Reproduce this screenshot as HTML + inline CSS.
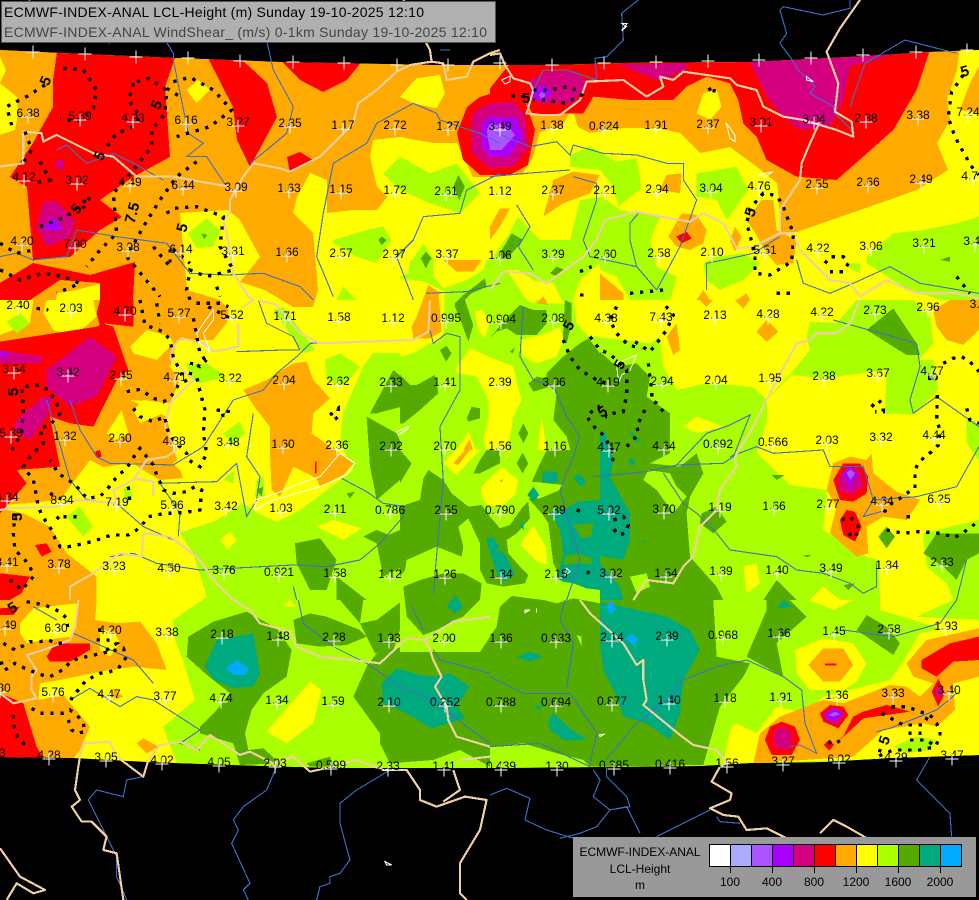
<!DOCTYPE html>
<html><head><meta charset="utf-8"><title>ECMWF LCL-Height</title>
<style>
html,body{margin:0;padding:0;background:#000;width:979px;height:900px;overflow:hidden}
svg{display:block}
text{font-family:"Liberation Sans",sans-serif;font-size:12px}
.l text{text-anchor:middle;fill:#000}
.b text{font-weight:bold;font-size:15px;text-anchor:middle;fill:#000}
.d path{fill:none;stroke:#000;stroke-width:10;stroke-dasharray:10 20}
.r path{fill:none;stroke:#3f70c8;stroke-width:3.3}
.t path{fill:none;stroke:#f0d0a2;stroke-width:6.5;stroke-linejoin:round}
.w path{fill:none;stroke:#fff;stroke-width:3}
</style></head><body>
<svg width="979" height="900" viewBox="0 0 979 900" xmlns="http://www.w3.org/2000/svg" shape-rendering="crispEdges">
<defs>
<clipPath id="c"><polygon points="0,50 60,53 175,58 280,62 433,65 553,65 623,63 750,62 850,57 930,52 979,50 979,755 890,758 823,762 750,763 700,766 490,768 333,768 233,765 147,762 73,758 0,757"/></clipPath>
<marker id="p" markerUnits="userSpaceOnUse" markerWidth="14" markerHeight="14" refX="7" refY="7" overflow="visible"><path d="M0.5 7H13.5M7 0.5V13.5" stroke="#fff" stroke-width="1" fill="none"/></marker>
</defs>
<rect width="979" height="900" fill="#000"/>
<g clip-path="url(#c)">
<rect width="979" height="900" fill="#ff0"/>

<!-- lime large -->
<g fill="#af0">
<polygon points="207,597 193,553 180,533 217,520 243,503 257,513 277,522 300,510 317,498 353,470 340,443 343,413 363,367 373,353 400,353 430,343 440,330 453,300 470,290 490,262 510,232 518,217 540,240 570,240 580,200 603,197 620,210 660,217 650,240 657,267 677,277 670,300 660,337 663,367 677,390 707,383 753,387 767,400 767,420 757,453 790,485 827,490 823,530 867,557 880,560 880,610 979,640 979,770 180,770 163,727 195,700 183,660 175,640 173,620"/>
<g transform="translate(490 300) scale(.3333)">
<polygon points="830,300 905,225 1000,235 1190,210 1285,180 1330,130 1320,50 1270,0 1100,0 1040,70 960,65 950,110 960,150 920,200"/>
<polygon points="1190,210 1285,180 1330,180 1345,270 1270,345 1185,340"/>
<polygon points="1300,700 1467,660 1467,900 1390,900 1300,850"/>
<polygon points="1430,360 1467,370 1467,480 1430,430"/>
</g>
<g transform="translate(490 0) scale(.3333)">
<polygon points="240,465 300,440 380,485 440,475 455,565 385,620 370,560 330,510 240,500"/>
<polygon points="620,520 740,500 775,570 710,660 680,600 620,590"/>
<polygon points="640,790 680,770 760,760 810,790 760,840 690,870 650,840"/>
<polygon points="1070,790 1110,790 1110,820 1070,800"/>
<polygon points="1130,770 1210,700 1300,690 1400,670 1467,650 1467,900 1350,900 1240,860 1130,790"/>
</g>
<g transform="translate(490 600) scale(.3333)"><polygon points="1280,50 1390,0 1467,0 1467,60"/></g>
</g>
<!-- yellow over lime -->
<g fill="#ff0">
<g transform="translate(490 0) scale(.3333)"><polygon points="250,830 310,800 380,830 420,900 250,900"/></g>
<g transform="translate(490 300) scale(.3333)">
<polygon points="290,0 540,0 510,110 480,130 400,120 300,110"/>
<polygon points="580,380 620,350 700,380 620,400"/>
<polygon points="760,800 800,790 810,850 770,880"/>
<polygon points="1165,770 1300,720 1310,800 1370,850 1390,900 1170,900"/>
<polygon points="960,900 1000,860 1050,900"/>
</g>
<g transform="translate(0 300) scale(.3333)">
<polygon points="660,720 690,695 710,720 685,750"/>
<polygon points="950,680 1000,660 1085,685 1030,720"/>
<polygon points="1110,0 1130,0 1100,20"/>
</g>
<g transform="translate(0 600) scale(.3333)">
<polygon points="800,395 930,245 965,270 940,370 860,430"/>
<polygon points="850,20 870,0 890,20"/>
</g>
<g transform="translate(490 600) scale(.3333)">
<polygon points="720,390 740,370 800,400 860,320 950,340 1000,290 1200,240 1230,200 1290,100 1467,65 1467,470 700,490"/>
<polygon points="915,150 1000,115 1090,130 1130,190 1100,245 1060,270 960,270 920,220"/>
<polygon points="960,0 1030,30 1090,0"/>
<polygon points="1170,0 1180,30 1280,50 1390,0"/>
</g>
</g>

<!-- orange -->
<g fill="#fa0">
<polygon points="0,45 960,45 957,70 947,100 950,120 937,143 948,170 917,190 883,202 840,217 797,232 780,232 778,190 777,183 757,167 730,147 700,153 680,133 657,128 623,128 590,133 578,127 572,108 562,127 540,132 533,157 523,173 490,177 473,177 457,143 433,143 400,137 373,140 370,157 377,187 387,197 377,210 353,210 327,213 327,180 310,173 297,197 293,213 313,233 318,290 313,307 293,307 265,290 240,282 260,257 240,220 228,210 180,213 187,290 220,300 233,315 213,340 177,340 170,367 180,380 170,403 130,400 167,417 173,447 183,478 160,480 143,470 133,463 103,467 90,460 60,500 30,503 0,505"/>
<g transform="translate(490 0) scale(.3333)">
<polygon points="1440,250 1467,200 1467,340 1410,330"/>
<polygon points="160,650 190,540 250,515 330,525 300,580 220,610"/>
<polygon points="510,570 530,525 575,520 570,580"/>
<polygon points="535,710 575,640 620,645 650,690 640,730 600,750 560,740"/>
<polygon points="720,720 735,680 755,710 735,755"/>
<polygon points="0,680 30,625 60,625 30,680 0,720"/>
<polygon points="310,800 340,830 400,880 400,900 320,900"/>
<polygon points="620,900 640,870 660,900"/>
<polygon points="740,900 770,880 780,900"/>
<polygon points="770,660 815,600 850,600 860,690 920,720 910,790 860,795 830,760 790,690"/>
</g>
<g transform="translate(0 300) scale(.3333)">
<polygon points="730,270 800,240 880,190 920,185 940,240 990,295 940,340 935,400 1060,490 1030,525 960,560 950,535 880,500 840,590 815,570 810,460 810,380 770,330"/>
<polygon points="0,625 70,640 150,680 200,760 290,830 290,900 0,900"/>
</g>
<g transform="translate(490 300) scale(.3333)">
<polygon points="530,110 560,70 570,150 550,165"/>
<polygon points="800,95 830,60 865,95 830,125"/>
<polygon points="630,0 670,0 650,20"/>
<polygon points="735,0 780,0 760,25"/>
<polygon points="1330,30 1380,0 1467,0 1467,90 1420,135 1370,120 1340,80"/>
<polygon points="1080,470 1130,480 1145,460 1150,520 1220,575 1290,600 1250,660 1180,650 1130,680 1135,760 1100,770 1020,700 1040,620 1010,570 1030,490"/>
</g>
<g transform="translate(0 600) scale(.3333)">
<polygon points="0,0 290,0 285,60 350,70 420,65 470,130 500,210 400,200 300,215 180,240 120,250 115,300 190,285 270,380 240,450 220,475 0,475"/>
<polygon points="410,430 430,415 475,440 440,460"/>
<polygon points="340,265 370,290 340,300"/>
</g>
<g transform="translate(490 600) scale(.3333)">
<polygon points="1250,190 1310,120 1400,100 1467,85 1467,230 1390,250 1395,330 1340,380 1300,370 1180,390 1090,470 790,490 810,400 870,350 1000,300 1060,310 1200,255 1250,260 1290,290 1330,250 1270,230"/>
<polygon points="955,195 1000,145 1060,145 1090,195 1050,245 1000,245"/>
</g>
</g>
<!-- yellow holes in orange -->
<g fill="#ff0">
<g transform="scale(.3333)">
<polygon points="0,170 18,210 0,250 50,290 55,340 45,390 0,405"/>
<polygon points="560,270 595,240 630,270 590,310"/>
<polygon points="1200,290 1250,235 1320,225 1335,280 1310,325 1240,310"/>
<polygon points="170,880 230,870 305,850 300,900 170,900"/>
<polygon points="440,840 445,835 455,860"/>
</g>
<g transform="translate(0 300) scale(.3333)">
<polygon points="0,0 100,0 90,70 0,105"/>
<polygon points="140,0 280,0 290,50 220,110 160,90 130,40"/>
<polygon points="300,80 320,65 335,85 315,100"/>
<polygon points="390,140 440,90 510,110 520,130 470,180 400,160"/>
<polygon points="340,370 365,330 385,400 345,420 320,400"/>
<polygon points="400,330 430,300 500,310 490,340 420,370"/>
<polygon points="690,0 730,0 715,60 680,75"/>
<polygon points="520,490 560,460 620,510 560,530"/>
</g>
<g transform="translate(490 0) scale(.3333)">
<polygon points="620,340 640,280 680,270 695,320 660,360"/>
</g>
<g transform="translate(0 600) scale(.3333)">
<polygon points="60,70 100,25 230,10 230,80 215,110 130,120 80,130 60,100"/>
<polygon points="300,85 345,100 360,130 330,170 300,150"/>
</g>
</g>

<!-- lime small -->
<g fill="#af0">
<g transform="scale(.3333)">
<polygon points="1150,520 1200,470 1290,520 1370,490 1440,580 1380,640 1290,610 1200,570"/>
<polygon points="1000,720 1100,690 1150,680 1175,720 1130,790 1070,770 1000,730"/>
<polygon points="1230,790 1270,730 1310,790 1290,850 1230,820"/>
<polygon points="565,700 620,655 660,690 640,740 590,745"/>
<polygon points="1010,900 1030,860 1070,900"/>
</g>
<g transform="translate(0 300) scale(.3333)">
<polygon points="20,65 60,40 90,70 50,100"/>
<polygon points="200,650 240,620 280,680 250,710"/>
<polygon points="370,570 385,555 400,590 380,615"/>
<polygon points="560,190 620,190 680,230 600,250 570,230"/>
<polygon points="820,30 850,20 945,150 910,160"/>
<polygon points="670,400 720,365 735,400 700,435"/>
<polygon points="975,180 1020,160 1080,200 1030,260 980,240"/>
<polygon points="680,530 705,510 700,550 670,540"/>
<polygon points="770,540 790,530 795,590 765,590"/>
</g>
<g transform="translate(490 600) scale(.3333)">
<polygon points="1210,440 1280,410 1340,420 1320,450 1250,460"/>
</g>
</g>

<!-- green -->
<g fill="#5a0">
<g transform="translate(490 300) scale(.3333)">
<polygon points="0,690 0,900 700,900 680,860 600,770 590,640 600,590 640,520 620,460 570,500 480,490 540,460 540,340 470,290 480,230 440,190 380,200 290,120 240,170 180,200 170,250 190,320 190,370 260,420 260,460 230,510 150,520 100,540 40,620"/>
<polygon points="1130,90 1210,25 1280,130 1290,165 1250,165"/>
<polygon points="1300,760 1340,700 1467,700 1467,760 1430,780 1400,840 1360,800"/>
<polygon points="845,525 885,525 860,540"/>
<polygon points="820,900 860,840 920,900"/>
<polygon points="1165,710 1190,680 1215,710 1190,745"/>
<polygon points="635,640 680,620 710,665 670,700 630,670"/>
<polygon points="1060,855 1095,850 1075,870"/>
<polygon points="940,765 965,765 950,772"/>
</g>
<g transform="translate(0 300) scale(.3333)">
<polygon points="1110,340 1180,210 1240,260 1300,240 1280,300 1130,340"/>
<polygon points="1100,350 1190,400 1230,490 1200,540 1130,600 1110,500"/>
<polygon points="1090,710 1130,690 1180,710 1210,800 1150,830 1130,730"/>
<polygon points="885,730 960,715 1010,780 980,870 930,870 890,790"/>
<polygon points="1040,580 1065,575 1050,595"/>
<polygon points="1010,830 1100,900 1010,900"/>
<polygon points="770,570 790,560 785,590"/>
<polygon points="1215,640 1300,600 1200,690 1130,720 1200,800 1200,900 1220,900 1200,690"/>
</g>
<g transform="translate(490 0) scale(.3333)">
<polygon points="30,760 65,700 100,720 40,790"/>
<polygon points="180,810 200,800 225,820 190,830"/>
<polygon points="1350,780 1380,770 1380,785"/>
</g>
<g transform="scale(.3333)">
<polygon points="1375,525 1395,560 1378,600 1360,560"/>
<polygon points="1145,710 1160,720 1145,735 1135,720"/>
<polygon points="1278,755 1295,775 1278,810 1262,775"/>
<polygon points="605,700 622,705 612,718"/>
<polygon points="1380,870 1460,830 1420,900 1380,900"/>
</g>
<g transform="translate(0 600) scale(.3333)">
<polygon points="565,110 640,65 740,35 830,85 875,150 860,230 790,280 755,330 735,400 745,450 790,445 840,490 720,495 700,430 600,400 600,380 650,330 690,280 615,220 560,170"/>
<polygon points="1060,290 1100,200 1130,160 1250,130 1270,100 1360,70 1470,40 1470,500 1380,450 1300,480 1170,490 1140,430 1140,400"/>
<polygon points="880,60 930,40 980,50 1080,90 1100,110 1040,135 960,140 890,130"/>
<polygon points="1020,0 1090,0 1080,70 1130,60 1210,0 1210,60 1180,150 1125,160 1080,70"/>
<polygon points="920,490 990,470 1000,500 930,500"/>
</g>
<g transform="translate(490 600) scale(.3333)">
<polygon points="0,0 670,0 680,170 780,190 760,230 690,320 640,495 300,500 280,480 200,460 100,430 0,440"/>
<polygon points="770,170 830,30 830,0 900,0 950,50 860,130 880,230"/>
<polygon points="1100,90 1130,45 1190,80 1230,130 1210,165"/>
</g>
</g>
<!-- lime holes in green -->
<g fill="#af0">
<g transform="translate(490 300) scale(.3333)">
<polygon points="60,660 120,620 180,640 220,760 170,820 100,800"/>
<polygon points="475,510 540,520 560,560 590,590 550,640 500,570 460,540"/>
<polygon points="240,680 300,670 310,700 250,705"/>
<polygon points="420,830 470,820 480,860 440,880"/>
<polygon points="150,340 170,340 175,410 155,430"/>
</g>
<g transform="translate(490 600) scale(.3333)">
<polygon points="260,110 275,110 270,135"/>
</g>
</g>

<!-- teal -->
<g fill="#00aa7f">
<g transform="translate(490 300) scale(.3333)">
<polygon points="310,390 345,395 370,480 360,530 420,640 420,720 400,780 340,770 280,750 250,720 215,670 180,640 220,620 270,610 310,530"/>
<polygon points="190,800 210,750 260,760 330,790 390,860 400,900 240,900 230,830"/>
<polygon points="415,480 425,470 435,490 425,500"/>
<polygon points="415,390 450,420 440,430"/>
<polygon points="450,725 460,720 465,730"/>
</g>
<g transform="translate(0 600) scale(.3333)">
<polygon points="615,200 650,120 760,100 780,220 760,260 700,265 640,240"/>
<polygon points="1145,250 1190,205 1260,225 1300,230 1350,220 1410,260 1370,320 1395,355 1295,385 1220,340 1150,310"/>
</g>
<g transform="translate(490 600) scale(.3333)">
<polygon points="310,0 530,50 600,90 630,150 580,240 570,340 540,420 470,370 400,350 380,290 340,210 330,130"/>
<polygon points="80,170 120,155 160,170 120,185"/>
<polygon points="175,360 190,340 240,385 290,420 220,420 180,390"/>
<polygon points="130,315 160,320 145,330"/>
<polygon points="880,0 910,20 860,25"/>
</g>
</g>
<g fill="#00aaff">
<g transform="translate(0 600) scale(.3333)"><polygon points="678,205 710,180 745,205 735,225 700,225"/></g>
<g transform="translate(490 600) scale(.3333)">
<polygon points="350,20 362,0 378,25 362,45"/>
<polygon points="405,115 425,100 445,120 430,135"/>
</g>
</g>

<!-- centre patch z8 -->
<rect x="400" y="260" width="200" height="392" fill="#af0"/>
<g transform="translate(400 260) scale(.3333)">
<g fill="#ff0">
<polygon points="0,0 30,0 25,40 0,50"/>
<polygon points="100,0 260,0 250,30 200,60 130,85 100,50"/>
<polygon points="0,55 75,65 135,95 130,215 115,245 90,250 40,280 0,290"/>
<polygon points="165,330 210,265 290,300 340,320 355,385 365,420 340,470 330,530 320,600 270,600 250,540 265,470 265,420 230,350 175,340"/>
<polygon points="150,600 205,515 240,600"/>
<polygon points="410,600 425,470 445,600"/>
<polygon points="320,30 355,30 400,60 420,110 400,130 380,120"/>
<polygon points="385,60 460,70 490,130 420,130"/>
<polygon points="360,240 440,220 480,200 490,240 470,290 410,310 370,290"/>
<polygon points="225,155 245,150 270,180 255,235 235,210"/>
<polygon points="540,60 600,10 600,230 565,230 530,190 520,120"/>
</g>
<g fill="#fa0">
<polygon points="130,0 245,0 220,35 170,35"/>
<polygon points="85,75 115,95 120,150 125,215 90,235 40,235 35,200 50,170 65,130"/>
<polygon points="190,570 210,535 218,570"/>
<polygon points="410,130 430,110 445,135"/>
</g>
<g fill="#5a0">
<polygon points="120,270 140,258 155,280 138,305"/>
<polygon points="0,345 30,375 50,375 105,345 115,400 60,450 10,490 0,490"/>
<polygon points="165,130 190,105 255,55 260,80 215,100 195,120 220,195 205,245 185,190 165,140"/>
<polygon points="450,40 470,20 495,30 470,50"/>
<polygon points="65,0 90,0 78,25"/>
<polygon points="270,235 310,185 360,135 400,150 440,150 440,190 410,225 350,225 320,205 290,215"/>
<polygon points="330,275 345,262 338,280"/>
<polygon points="495,120 515,130 515,190 500,250 488,245"/>
<polygon points="440,340 490,290 540,250 565,235 600,280 600,600 520,600 500,530 460,480 470,400 450,380 400,395 385,370 410,350 440,355"/>
<polygon points="200,475 215,440 240,445 240,475 205,485"/>
<polygon points="355,520 370,490 385,520 370,550"/>
<polygon points="345,600 370,570 380,600"/>
</g>
</g>
<g transform="translate(400 450) scale(.3333)">
<rect x="0" y="0" width="600" height="606" fill="#af0"/>
<g fill="#ff0">
<polygon points="130,40 165,0 240,0 170,75"/>
<polygon points="315,25 330,0 335,0 320,25"/>
<polygon points="245,110 305,50 355,90 345,135 310,165 265,170 245,140"/>
</g>
<g fill="#fa0">
<polygon points="160,40 195,0 210,0 175,45"/>
<polygon points="298,90 310,88 305,98"/>
</g>
<g fill="#5a0">
<polygon points="0,0 35,40 0,100"/>
<polygon points="220,70 240,30 260,0 300,0 300,40 240,70"/>
<polygon points="350,40 368,8 385,40 368,70"/>
<polygon points="0,170 60,150 70,85 85,60 130,90 155,130 205,170 245,165 270,200 300,235 330,225 365,175 385,155 390,205 350,250 320,270 325,310 360,350 385,375 375,400 310,410 260,400 240,360 240,280 205,205 175,230 190,290 185,320 110,290 20,330 15,360 0,380"/>
<polygon points="10,410 60,390 130,370 190,370 245,400 240,450 190,500 165,510 110,540 70,555 20,500"/>
<polygon points="240,606 290,530 300,470 335,438 430,450 470,460 520,445 600,460 600,606"/>
<polygon points="395,95 425,30 440,0 600,0 600,380 480,380 460,340 445,220 425,190 385,145 420,145 480,120 490,105"/>
</g>
<g fill="#00aa7f">
<polygon points="258,265 280,262 298,290 285,315 300,300 320,320 345,375 310,395 290,370 270,310"/>
<polygon points="360,230 368,210 372,240"/>
<polygon points="382,135 400,110 418,135 400,155"/>
<polygon points="425,95 430,65 470,65 475,95 450,100"/>
<polygon points="520,85 535,70 558,95 545,110"/>
<polygon points="450,185 480,180 510,170 530,155 600,150 600,420 560,415 520,400 490,395 470,385 475,370 490,310 480,240"/>
<polygon points="140,470 165,435 190,470 165,490"/>
</g>
<g fill="#5a0">
<polygon points="520,225 580,220 575,260 545,265"/>
<polygon points="495,320 530,310 575,325 575,340 525,340 490,345"/>
</g>
<polygon fill="#ff0" points="360,285 400,225 440,295 440,345 410,335"/>
<polygon fill="#af0" points="530,555 545,560 545,590"/>
</g>

<!-- red -->
<g fill="#f00">
<polygon points="58,45 175,45 175,58 165,87 170,157 133,177 100,200 122,217 100,230 70,257 33,260 27,187 10,177 33,143 53,107 53,80"/>
<polygon points="208,58 240,58 267,83 277,117 263,143 250,167 237,140 233,107"/>
<polygon points="280,60 363,60 347,80 323,92 300,80"/>
<polygon points="287,157 300,152 313,160 290,173"/>
<polygon points="457,133 467,107 480,97 503,90 525,100 535,130 528,165 510,175 480,175 463,160"/>
<g transform="translate(0 300) scale(.3333)">
<polygon points="0,125 290,80 310,70 340,80 385,210 350,240 280,380 210,370 150,350 180,500 50,510 80,550 0,640"/>
<polygon points="300,0 400,0 400,80 310,70 300,80 290,40"/>
<polygon points="105,735 140,730 155,755 125,770"/>
<polygon points="285,455 300,450 305,470 292,475"/>
<polygon points="0,820 90,830 65,880 30,900 0,900"/>
<polygon points="945,485 950,485 950,520 945,520"/>
</g>
<polygon points="0,283 33,263 90,275 135,262 133,300 100,300 100,283 60,280 30,300 0,300"/>
<g transform="translate(0 600) scale(.3333)">
<polygon points="0,25 60,20 40,45 0,45"/>
<polygon points="0,280 70,310 110,440 130,475 0,475"/>
<polygon points="140,170 165,130 270,130 270,150 210,185 150,185"/>
</g>
<g transform="translate(490 0) scale(.3333)">
<polygon points="0,265 60,190 1320,150 1280,270 1210,390 1120,470 1040,540 920,530 830,480 800,410 760,370 745,300 720,250 650,230 590,260 550,300 480,300 420,300 310,290 280,340 230,340 130,345 110,310 0,290"/>
<polygon points="558,710 590,695 605,715 575,730"/>
</g>
<g transform="translate(490 300) scale(.3333)">
<polygon points="1030,540 1060,490 1110,490 1135,530 1130,580 1090,605 1050,600"/>
<polygon points="1050,660 1070,630 1095,635 1115,680 1095,725 1060,705"/>
</g>
<g transform="translate(490 600) scale(.3333)">
<polygon points="1295,180 1380,130 1467,110 1467,180 1390,185 1340,230 1295,205"/>
<polygon points="1345,235 1365,280 1345,320 1325,275"/>
<polygon points="825,420 840,380 875,365 915,380 930,420 905,465 845,465"/>
<polygon points="990,340 1020,315 1060,320 1075,345 1045,385 1000,365"/>
<polygon points="1060,410 1090,350 1120,335 1190,315 1260,335 1190,345 1120,355 1045,425"/>
<polygon points="1002,435 1018,418 1032,435 1018,452"/>
<polygon points="1005,190 1040,190 1040,197 1005,197"/>
</g>
</g>
<!-- magenta -->
<g fill="#d4007f">
<g transform="scale(.3333)">
<polygon points="110,680 130,605 170,605 225,660 215,710 140,740"/>
<polygon points="165,480 190,480 195,505 170,512"/>
</g>
<g transform="translate(490 0) scale(.3333)">
<polygon points="390,195 590,190 590,205 520,240 500,240"/>
<polygon points="780,185 1210,165 1080,200 1060,300 1020,380 930,390 880,350 830,290"/>
<polygon points="120,240 170,215 260,215 290,250 250,310 150,310 120,290"/>
<polygon points="-55,350 -40,330 0,310 70,305 105,350 115,440 70,500 0,505 -55,460"/>
</g>
<g transform="translate(0 300) scale(.3333)">
<polygon points="140,210 270,110 350,170 290,290 210,320 140,260"/>
<polygon points="50,360 130,290 160,290 140,350 90,420 40,390"/>
<polygon points="0,150 130,170 120,190 0,190"/>
</g>
<g transform="translate(490 300) scale(.3333)"><polygon points="1045,530 1075,500 1110,510 1120,560 1085,585 1045,570"/></g>
<g transform="translate(490 600) scale(.3333)">
<polygon points="850,420 855,390 880,380 905,400 900,450 855,445"/>
<polygon points="1345,255 1358,280 1345,300 1332,275"/>
<polygon points="1000,345 1030,322 1065,340 1040,378 1010,365"/>
</g>
</g>
<!-- purple -->
<g fill="#aa00ff">
<g transform="scale(.3333)">
<polygon points="130,690 150,655 175,660 185,690"/>
</g>
<g transform="translate(490 0) scale(.3333)">
<polygon points="130,270 160,255 190,275 165,300 130,300"/>
<polygon points="-25,370 0,350 80,355 100,410 55,470 0,470 -25,440"/>
</g>
<g transform="translate(0 300) scale(.3333)"><polygon points="0,160 12,150 25,165 12,178"/></g>
<g transform="translate(490 300) scale(.3333)"><polygon points="1060,520 1080,500 1100,520 1080,570"/></g>
<g transform="translate(490 600) scale(.3333)"><polygon points="1005,340 1030,325 1060,340 1040,360 1015,360"/></g>
</g>
<g fill="#aa55ff">
<g transform="translate(490 0) scale(.3333)">
<polygon points="-10,390 0,370 60,385 75,405 35,450 0,450"/>
<polygon points="145,285 155,275 168,285 155,297"/>
</g>
<g transform="translate(490 300) scale(.3333)"><polygon points="1070,520 1082,508 1095,520 1082,540"/></g>
<g transform="translate(490 600) scale(.3333)"><polygon points="1015,345 1035,335 1050,342 1030,350"/></g>
</g>
</g>

<!-- rivers -->
<g class="r">
<g transform="scale(.3333)"><path d="M85 0L330 130M490 110L520 160L520 180L565 400L610 430L560 470L620 470L680 560M800 120L820 210L880 320L860 400L800 450L750 490M1320 150L1350 150M1240 310L1130 370L1100 430L1000 490L970 640L950 770L1000 890M1240 310L1310 340L1320 360L1440 400L1500 430M170 450L200 435L260 490L340 460L400 490L490 540M0 770L50 760L100 780L200 770L230 690L350 710L500 730L570 820L680 825L790 820L900 860L940 900M1280 880L1400 875L1500 850M1500 520L1400 570L1380 640L1270 650L1240 720L1190 770L1240 900"/></g>
<g transform="translate(490 0) scale(.3333)"><path d="M445 0L395 40L400 120L350 170L315 175L320 235L290 245M870 30L880 20L1000 45L1080 25L1080 0M870 30L890 100L870 130L900 170L925 210L975 260L960 280L1030 320L1035 340L1095 400M20 400L120 440L200 425L240 465L250 435L340 460L440 465L530 490L580 490L580 540L620 600L570 740L500 870M0 530L110 520L240 510M250 530L320 550L320 600L280 720L300 770L440 800L500 870M445 640L420 670L420 720L440 800M650 870L650 790L700 780L790 760L870 710M1080 320L1125 190L1245 120L1400 160M920 780L940 850L1020 880L1090 850L1200 800L1290 850L1467 880M80 615L120 680L85 740L130 810M130 270L160 210L230 210L320 240"/></g>
<g transform="translate(0 300) scale(.3333)"><path d="M140 300L170 400L210 540L260 600L350 610L430 680L520 720M210 300L240 390L290 470L330 490L520 495L610 440L700 300L790 270L830 220L890 170L930 130L1060 125M710 155L850 150L900 150M775 0L800 70L880 110L900 150M760 340L740 470L780 530L770 600L740 650L710 490L650 545L480 550L540 640L535 710M1025 535L1100 575L1150 610L1215 620L1210 650L1140 730L1080 780L980 800L880 795L600 810L470 790L400 760L330 770M1300 880L1330 540L1320 380L1380 270L1380 110L1340 100L1300 130L1290 90M880 860L890 900"/></g>
<g transform="translate(490 300) scale(.3333)"><path d="M100 20L90 170L130 240L190 260L230 350L270 410L250 470L210 570L270 780L230 900M310 530L470 515L560 495L700 490L730 470L780 345L720 375L650 400L560 495M520 520L580 610L620 640L680 700L720 750L860 770L920 810L1000 820L1080 850L1120 880L1160 860L1160 790M720 470L800 440L850 460L1000 450L1020 500L1120 500L1150 600L1280 590L1400 560L1467 440M1150 600L1120 650L1190 630M1270 340L1260 300L1290 200L1280 130L1030 60M1270 340L1340 290L1467 380M1430 780L1400 900"/></g>
<g transform="translate(0 600) scale(.3333)"><path d="M460 250L400 180L220 100M460 300L600 390L540 430L600 450M210 300L270 265L360 320L410 290L460 300M1000 140L1100 190L1200 260L1300 300L1400 380L1470 430M1300 150L1320 180L1470 220M430 530L380 540L370 590L290 570L265 600L350 770L350 830L380 900M830 500L800 570L730 620L700 660L715 690L695 730L750 850L730 870L745 900M1170 510L1070 570L1020 610L1020 670L1050 780L1020 820L990 830L990 850L960 860L950 900M895 0L910 70L1000 140M1235 20L1270 90M100 20L170 60"/></g>
<g transform="translate(490 600) scale(.3333)"><path d="M0 585L50 565L120 595L105 660L170 690L250 715M310 510L330 540L310 590L360 630L410 620L450 700M350 500L350 530L410 590L420 620L360 630L320 680L270 700L210 715M660 630L560 680L500 710M1320 470L1280 540L1380 640L1385 710M680 650L690 665L750 670M0 230L100 280L240 280L320 400L300 490M0 440L150 430L300 500M225 0L210 60L250 130L230 260M350 480L430 380L540 290L580 240L680 200L770 180L880 230L935 270L945 370L980 460L930 435L900 440M1060 90L1210 110L1350 70L1400 0M1160 395L1200 385L1340 330L1400 280"/></g>
</g>

<!-- borders -->
<g class="t">
<g transform="scale(.3333)"><path d="M1210 0L1290 150L1295 185L1230 195L1190 215L1130 270L1075 310L1060 370L1000 430L960 470L870 515L840 505L760 490L730 530L690 600L690 640L670 660L680 700L700 820L720 850L745 890L760 900M1500 150L1470 160L1420 185L1400 230L1340 240L1330 190L1295 185M690 560L600 545L520 530L410 530L340 470L280 460L170 405L130 425L125 400L70 395L70 490L0 500"/></g>
<g transform="translate(490 0) scale(.3333)"><path d="M0 165L30 160L45 195L70 235L120 250L130 270L110 340L150 345L210 345L270 300L290 245L400 240L470 290L520 260L510 230L550 240L580 215L650 225L720 235L740 255L800 270L820 320L880 350L940 360L990 375L1040 390L1090 410L1085 365L1035 335L1045 250L1010 155L1050 85L1110 0M985 375L960 430L935 490L930 540L870 630L870 700L790 740L740 745L700 670L640 640L600 665L510 650L440 635L345 660L320 720L280 770L170 850L120 820L40 815L0 870M870 700L910 700L930 750L1020 840L1080 850L1110 890L1190 840L1280 880L1400 880L1467 895"/></g>
<g transform="translate(0 300) scale(.3333)"><path d="M730 20L760 0M715 70L715 140L640 155L610 130L545 115L520 140L510 175M775 0L830 15L900 100L960 130L1240 120L1285 95L1290 0M510 175L580 240L510 310L495 380L530 450L500 470L440 480L400 540L340 570L350 610L230 600L170 620L30 625L0 630M400 535L460 545L460 590M430 700L425 770L360 760L280 820L210 860L210 900M430 700L510 710L590 770L650 850L700 900"/></g>
<g transform="translate(490 300) scale(.3333)"><path d="M1110 0L1080 70L1040 100L980 100L960 120L920 130L840 280L790 380L735 470L740 500L690 570L680 630L630 680L610 770L580 800L550 850L470 840L430 900"/></g>
<g transform="translate(0 600) scale(.3333)"><path d="M700 0L750 30L780 70L870 95L890 140L960 170L1100 185L1140 190L1220 115L1275 120L1360 65L1470 50M235 0L225 80L210 120L130 150L80 165L110 210L95 230L95 270L110 295L40 310L0 280M1275 120L1290 150L1300 180L1325 230L1305 260L1340 320L1345 360L1370 410L1470 440M250 430L240 470L235 500L225 570L240 600L215 620L245 665L275 665L320 710L310 750L350 760L360 830L370 900M250 430L330 425L350 470L430 530L445 480L480 435L540 425L590 450L630 405L720 465L750 455L820 490L880 470L930 515L1000 500L1070 480L1150 510L1220 510L1260 570L1260 600L1310 620L1395 590L1460 600L1440 690L1380 790L1380 880L1400 900M1360 510L1380 570L1330 605M0 745L60 830L135 870L100 880L50 850L20 900M1380 480L1470 470"/></g>
<g transform="translate(490 600) scale(.3333)"><path d="M270 0L300 40L400 130L440 195L460 180L460 240L470 300L460 315L570 405L610 435L680 450L710 490L690 500L665 545L725 580L720 600L660 625L700 645L745 650L770 690L830 685L890 715M990 700L1030 660L1070 680L1140 720"/></g>
</g>

<!-- lakes -->
<g class="w">
<g transform="translate(490 0) scale(.3333)"><path d="M35 240L60 228L60 245L45 252ZM950 230L970 245L950 240ZM395 70L412 70L395 92L410 80ZM708 368L735 405L735 425L720 415ZM805 525L850 515L825 530Z"/></g>
<g transform="scale(.3333)"><path d="M1410 45V65M1405 85L1415 100"/></g>
<g transform="translate(0 300) scale(.3333)"><path d="M640 30L610 70L590 100L600 130L630 155L610 100L640 60ZM1190 395L1225 380L1225 385L1195 405ZM765 600L830 580L900 550L960 530L1020 460L1065 490L1040 525L960 560L820 600L765 630Z"/></g>
<g transform="translate(490 300) scale(.3333)"><path d="M380 190L440 165L420 210L395 225L385 250ZM230 805L240 815L225 825Z"/></g>
<g transform="translate(0 600) scale(.3333)"><path d="M1155 785L1175 795L1160 795Z"/></g>
<g transform="translate(490 600) scale(.3333)"><path d="M105 30L120 30L105 38ZM140 25V38M328 405L345 402L330 410Z"/></g>
</g>

<!-- dotted contours -->
<g class="d">
<g transform="scale(.3333)"><path d="M135 255L80 290L20 320L40 395M75 395L95 450L65 495M120 485L150 540L100 550M190 205L250 210L290 270L280 325L230 365L180 355M410 245L445 235L500 270L495 340L455 390L455 440L400 510L340 580L345 640L350 700L300 750L260 800M400 250L385 300L420 350L400 380L350 400L320 440M520 245L570 232L640 270L695 330L630 380L530 410M500 265L540 290M590 485L530 530L480 600L430 680L380 770L430 830L480 890M500 640L520 625L590 620L670 650L660 740L700 810L620 830L570 810L560 870L570 900M0 730L50 760L100 750M120 680L200 650L270 590L240 640M460 740L510 800L510 740L570 790M0 810L60 840L130 820L190 830L240 850L170 880M650 860L660 890"/></g>
<g transform="translate(490 0) scale(.3333)"><path d="M65 288L110 290M130 270L170 270L240 260L275 285L225 310L170 300L130 300M655 270L675 260L670 285M1420 225L1385 275L1375 350L1385 385L1405 430L1445 500L1467 525M850 585L820 580L780 625L770 670L785 725L795 770L795 820L840 825L905 785L910 700L880 620L860 585M1005 790L1020 770L1060 770L1075 790L1060 815L1020 815M270 815L305 800M270 885L300 885M420 880L520 870M860 880L905 880M1400 830L1440 880"/></g>
<g transform="translate(0 300) scale(.3333)"><path d="M35 450L65 400L70 330L65 260L120 255L145 270L170 310L180 340L150 375L120 385L130 430L90 470L70 500L100 540L105 565L115 620L125 645L155 690L165 715L180 740L205 740L255 730L285 722L335 705L385 705L410 690L430 670L445 650L495 640L525 640L570 635L600 630L605 570L585 560L560 575L520 580L490 570L470 525L460 495L440 470L420 445L405 465L390 490L375 510L355 525L335 550L320 570L300 590L260 595L240 570L220 550L175 520L150 480M230 650L170 650L190 670M380 275L420 268L460 295L490 305L510 295L535 255L570 235L575 185L600 200L620 180M400 325L420 350L460 365L495 350L500 385L520 420L560 460L565 480L600 500L620 460L610 400L615 330L600 275L590 230M650 330L690 335L675 345L650 350M990 345L1015 325L1015 350L995 365M420 0L435 75L490 95L510 120L520 170L550 235M470 10L480 70M590 10L660 10L685 20M625 20L700 60M580 55L600 160L620 185M110 25L145 30M45 640L40 700L45 750L75 780L90 800L100 830L65 870L30 840M150 580L190 600M385 560L390 610"/></g>
<g transform="translate(490 300) scale(.3333)"><path d="M220 120L240 170L255 190L270 210L295 225L320 240L350 250M300 110L315 130L330 150L355 160L380 180L410 210L410 250L410 280L405 310L400 335L370 340L350 350L325 320L305 335L290 350L305 370L320 390L340 405L360 440L375 470L360 490M435 125L480 155L500 130L530 90L550 45L520 10M475 190L480 235L485 270L485 300L500 310L520 335M465 330L450 360L440 375L445 400L430 420L410 440M380 20L360 60L380 100L415 135L455 145M1360 190L1390 175L1415 170L1440 185L1467 215M1342 285L1340 360L1350 390L1345 435L1325 455L1305 470L1285 490L1275 510L1275 565L1250 580L1230 595L1205 610L1190 625L1175 650M1190 690L1240 700L1290 695L1350 700L1395 712L1440 685L1467 660M1145 320L1165 300L1180 315L1180 335L1155 335M1430 325L1440 360L1467 370M1250 650L1265 650M1055 660L1080 650L1100 670L1110 690L1090 715L1065 685M290 815L310 825M260 630L275 635M370 660L400 650L415 675L405 700L385 705L370 685"/></g>
<g transform="translate(0 600) scale(.3333)"><path d="M15 210L45 190L75 205L100 215L125 225L150 230L170 220L195 205L210 185L235 175L260 170L305 160L370 145L380 170L355 205L330 215L300 220L280 230L255 245L240 265L220 285L210 305M10 130L45 150L65 140L90 125L120 125L145 120L170 130L190 130M0 190L30 185M40 345L45 400L70 430L95 440M95 325L120 340L145 340L190 340L210 330L235 350L250 370L255 395L230 400L215 390L205 360M300 85L295 120L325 120L350 130L305 160M80 5L135 15L180 35L200 55L205 100"/></g>
<g transform="translate(490 600) scale(.3333)"><path d="M1205 320L1250 320L1290 335L1320 345L1340 370L1350 390L1350 415L1335 440L1290 450L1260 450L1210 450L1150 475M1175 340L1240 375L1300 375L1315 345M1255 400L1300 400M1260 420L1310 420L1330 435M1165 450L1190 460M1015 430L1043 420L1055 440"/></g>
</g>

<!-- contour labels -->
<g class="b">
<text transform="translate(50 83) rotate(-65)">5</text>
<text transform="translate(161 107) rotate(-65)">5</text>
<text transform="translate(104 158) rotate(-65)">5</text>
<text transform="translate(80 212) rotate(-50)">5</text>
<text transform="translate(137 214) rotate(-75)">7.5</text>
<text transform="translate(187 229) rotate(-75)">5</text>
<text transform="translate(526 103)">5</text>
<text transform="translate(755 214) rotate(-70)">5</text>
<text transform="translate(966 76) rotate(-15)">5</text>
<text transform="translate(18 392) rotate(-90)">5</text>
<text transform="translate(22 517) rotate(-90)">5</text>
<text transform="translate(573 328) rotate(-60)">5</text>
<text transform="translate(624 367) rotate(-60)">5</text>
<text transform="translate(605 416) rotate(-30)">5</text>
<text transform="translate(938 377) rotate(-90)">5</text>
<text transform="translate(15 612) rotate(-30)">5</text>
<text transform="translate(889 742) rotate(-70)">5</text>
</g>

<!-- value labels -->
<g class="l">
<text x="28" y="117">6.88</text><text x="80" y="120">5.59</text><text x="133" y="122">4.93</text><text x="186" y="124">6.16</text><text x="238" y="126">3.27</text><text x="290" y="127">2.85</text><text x="343" y="129">1.17</text><text x="395" y="129">2.72</text><text x="448" y="130">1.27</text><text x="500" y="130">3.49</text><text x="552" y="129">1.38</text><text x="604" y="130">0.824</text><text x="656" y="129">1.91</text><text x="708" y="128">2.87</text><text x="761" y="126">3.01</text><text x="814" y="123">3.04</text><text x="866" y="122">2.88</text><text x="918" y="119">3.38</text><text x="968" y="116">7.24</text>
<text x="24" y="181">4.12</text><text x="77" y="184">3.02</text><text x="130" y="186">4.49</text><text x="183" y="189">6.44</text><text x="236" y="191">3.09</text><text x="289" y="192">1.63</text><text x="341" y="193">1.15</text><text x="395" y="194">1.72</text><text x="446" y="195">2.61</text><text x="500" y="195">1.12</text><text x="553" y="194">2.87</text><text x="605" y="194">2.21</text><text x="657" y="193">2.94</text><text x="711" y="192">3.04</text><text x="759" y="190">4.76</text><text x="817" y="188">2.55</text><text x="868" y="186">2.66</text><text x="921" y="183">2.49</text><text x="973" y="180">4.71</text>
<text x="22" y="245">4.20</text><text x="75" y="248">7.90</text><text x="128" y="251">3.98</text><text x="181" y="253">6.14</text><text x="233" y="255">3.81</text><text x="287" y="256">1.66</text><text x="341" y="257">2.57</text><text x="394" y="258">2.97</text><text x="447" y="258">3.37</text><text x="500" y="259">1.06</text><text x="553" y="258">3.29</text><text x="605" y="258">2.60</text><text x="659" y="257">2.58</text><text x="712" y="256">2.10</text><text x="765" y="254">5.51</text><text x="818" y="252">4.22</text><text x="871" y="250">3.06</text><text x="924" y="247">3.21</text><text x="975" y="245">3.41</text>
<text x="18" y="309">2.40</text><text x="71" y="312">2.03</text><text x="125" y="315">4.70</text><text x="179" y="317">5.27</text><text x="232" y="319">5.52</text><text x="285" y="320">1.71</text><text x="339" y="321">1.58</text><text x="393" y="322">1.12</text><text x="446" y="322">0.995</text><text x="501" y="323">0.904</text><text x="553" y="322">2.08</text><text x="606" y="322">4.38</text><text x="661" y="321">7.43</text><text x="715" y="319">2.13</text><text x="768" y="318">4.28</text><text x="822" y="316">4.22</text><text x="875" y="314">2.73</text><text x="928" y="311">2.96</text><text x="978" y="308">3.1</text>
<text x="14" y="373">3.54</text><text x="68" y="376">3.42</text><text x="121" y="379">2.45</text><text x="175" y="381">4.71</text><text x="230" y="382">3.22</text><text x="284" y="384">2.04</text><text x="338" y="385">2.62</text><text x="391" y="386">2.33</text><text x="445" y="386">1.41</text><text x="500" y="386">2.39</text><text x="554" y="386">3.06</text><text x="608" y="386">4.19</text><text x="662" y="385">2.94</text><text x="716" y="384">2.04</text><text x="770" y="382">1.95</text><text x="824" y="380">2.88</text><text x="878" y="377">3.67</text><text x="932" y="375">4.77</text>
<text x="11" y="437">5.85</text><text x="65" y="440">1.82</text><text x="120" y="442">2.60</text><text x="174" y="445">4.38</text><text x="228" y="446">3.48</text><text x="283" y="448">1.60</text><text x="337" y="449">2.36</text><text x="391" y="450">2.02</text><text x="445" y="450">2.70</text><text x="500" y="450">1.56</text><text x="555" y="450">1.16</text><text x="609" y="451">4.47</text><text x="664" y="450">4.64</text><text x="718" y="448">0.892</text><text x="773" y="446">0.566</text><text x="827" y="444">2.03</text><text x="881" y="441">3.32</text><text x="934" y="439">4.44</text>
<text x="7" y="501">4.34</text><text x="62" y="504">8.34</text><text x="117" y="506">7.19</text><text x="172" y="509">5.96</text><text x="226" y="510">3.42</text><text x="281" y="512">1.03</text><text x="335" y="513">2.11</text><text x="390" y="514">0.786</text><text x="446" y="514">2.55</text><text x="500" y="514">0.790</text><text x="554" y="514">2.39</text><text x="609" y="514">5.02</text><text x="664" y="513">3.70</text><text x="720" y="511">1.19</text><text x="774" y="510">1.66</text><text x="828" y="508">2.77</text><text x="882" y="505">4.64</text><text x="939" y="503">6.25</text>
<text x="7" y="566">3.41</text><text x="59" y="568">3.78</text><text x="114" y="570">3.23</text><text x="169" y="572">4.50</text><text x="224" y="574">3.76</text><text x="279" y="576">0.921</text><text x="335" y="577">1.58</text><text x="390" y="578">1.12</text><text x="445" y="578">1.26</text><text x="501" y="578">1.34</text><text x="556" y="578">2.15</text><text x="611" y="577">3.02</text><text x="666" y="577">1.54</text><text x="721" y="575">1.89</text><text x="777" y="574">1.40</text><text x="831" y="572">3.49</text><text x="887" y="569">1.84</text><text x="942" y="566">2.33</text>
<text x="5" y="629">2.49</text><text x="56" y="632">6.30</text><text x="110" y="634">4.20</text><text x="167" y="636">3.38</text><text x="222" y="638">2.18</text><text x="278" y="640">1.48</text><text x="334" y="641">2.28</text><text x="389" y="642">1.93</text><text x="444" y="642">2.00</text><text x="501" y="642">1.36</text><text x="556" y="642">0.933</text><text x="612" y="641">2.14</text><text x="667" y="640">2.89</text><text x="723" y="639">0.968</text><text x="779" y="637">1.66</text><text x="834" y="635">1.45</text><text x="889" y="633">2.58</text><text x="946" y="630">1.93</text>
<text x="-1" y="692">5.30</text><text x="53" y="696">5.76</text><text x="109" y="698">4.47</text><text x="165" y="700">3.77</text><text x="221" y="702">4.74</text><text x="277" y="704">1.34</text><text x="333" y="705">1.59</text><text x="389" y="706">2.10</text><text x="445" y="706">0.252</text><text x="501" y="706">0.788</text><text x="556" y="706">0.694</text><text x="612" y="705">0.877</text><text x="669" y="704">1.40</text><text x="725" y="702">1.18</text><text x="781" y="701">1.91</text><text x="837" y="699">1.36</text><text x="893" y="697">3.33</text><text x="949" y="694">3.40</text>
<text x="-6" y="757">4.33</text><text x="49" y="759">4.28</text><text x="106" y="761">3.05</text><text x="162" y="764">4.02</text><text x="219" y="766">4.05</text><text x="275" y="767">2.03</text><text x="331" y="769">0.599</text><text x="388" y="770">2.33</text><text x="444" y="770">1.41</text><text x="501" y="770">0.439</text><text x="557" y="770">1.30</text><text x="614" y="769">0.385</text><text x="670" y="768">0.416</text><text x="727" y="767">1.56</text><text x="783" y="765">3.27</text><text x="839" y="763">6.02</text><text x="896" y="761">4.29</text><text x="952" y="759">3.47</text>
</g>
<!-- crosses -->
<g fill="none" stroke="none" style="marker:url(#p)">
<path d="M33 52 85 54 136 57 188 58 240 61 293 62 344 63 397 65 448 65 500 63 552 65 604 63 656 62 708 61 759 60 811 58 863 55 916 52 967 50"/>
<path d="M28 117 80 120 133 122 186 124 238 126 290 127 343 129 395 129 448 130 500 130 552 129 604 130 656 129 708 128 761 126 814 123 866 122 918 119 968 116"/>
<path d="M24 181 77 184 130 186 183 189 236 191 289 192 341 193 395 194 446 195 500 195 553 194 605 194 657 193 711 192 759 190 817 188 868 186 921 183 973 180"/>
<path d="M22 245 75 248 128 251 181 253 233 255 287 256 341 257 394 258 447 258 500 259 553 258 605 258 659 257 712 256 765 254 818 252 871 250 924 247 975 245"/>
<path d="M18 309 71 312 125 315 179 317 232 319 285 320 339 321 393 322 446 322 501 323 553 322 606 322 661 321 715 319 768 318 822 316 875 314 928 311"/>
<path d="M14 373 68 376 121 379 175 381 230 382 284 384 338 385 391 386 445 386 500 386 554 386 608 386 662 385 716 384 770 382 824 380 878 377 932 375"/>
<path d="M11 437 65 440 120 442 174 445 228 446 283 448 337 449 391 450 445 450 500 450 555 450 609 451 664 450 718 448 773 446 827 444 881 441 934 439"/>
<path d="M7 501 62 504 117 506 172 509 226 510 281 512 335 513 390 514 446 514 500 514 554 514 609 514 664 513 720 511 774 510 828 508 882 505 939 503"/>
<path d="M7 566 59 568 114 570 169 572 224 574 279 576 335 577 390 578 445 578 501 578 556 578 611 577 666 577 721 575 777 574 831 572 887 569 942 566"/>
<path d="M5 629 56 632 110 634 167 636 222 638 278 640 334 641 389 642 444 642 501 642 556 642 612 641 667 640 723 639 779 637 834 635 889 633 946 630"/>
<path d="M0 692 53 696 109 698 165 700 221 702 277 704 333 705 389 706 445 706 501 706 556 706 612 705 669 704 725 702 781 701 837 699 893 697 949 694"/>
<path d="M49 759 106 761 162 764 219 766 275 767 331 769 388 770 444 770 501 770 557 770 614 769 670 768 727 767 783 765 839 763 896 761 952 759"/>
</g>

<!-- header -->
<rect x="1.5" y="1.5" width="494" height="41" fill="#b0b0b0" stroke="#555"/>
<text x="4" y="17" style="font-size:14px" fill="#000" textLength="420" lengthAdjust="spacing">ECMWF-INDEX-ANAL LCL-Height (m) Sunday 19-10-2025 12:10</text>
<text x="4" y="37" style="font-size:14px" fill="#444" textLength="483" lengthAdjust="spacing">ECMWF-INDEX-ANAL WindShear_ (m/s) 0-1km Sunday 19-10-2025 12:10</text>

<!-- legend -->
<rect x="573" y="837" width="403" height="60" fill="#999"/>
<g stroke="#000" stroke-width="1">
<rect x="709.5" y="844.5" width="21" height="22" fill="#fff"/>
<rect x="730.5" y="844.5" width="21" height="22" fill="#aaf"/>
<rect x="751.5" y="844.5" width="21" height="22" fill="#a5f"/>
<rect x="772.5" y="844.5" width="21" height="22" fill="#a0f"/>
<rect x="793.5" y="844.5" width="21" height="22" fill="#d4007f"/>
<rect x="814.5" y="844.5" width="21" height="22" fill="#f00"/>
<rect x="835.5" y="844.5" width="21" height="22" fill="#fa0"/>
<rect x="856.5" y="844.5" width="21" height="22" fill="#ff0"/>
<rect x="877.5" y="844.5" width="21" height="22" fill="#af0"/>
<rect x="898.5" y="844.5" width="21" height="22" fill="#5a0"/>
<rect x="919.5" y="844.5" width="21" height="22" fill="#00aa7f"/>
<rect x="940.5" y="844.5" width="21" height="22" fill="#0af"/>
<path d="M730.5 867V873M772.5 867V873M814.5 867V873M856.5 867V873M898.5 867V873M940.5 867V873" fill="none"/>
</g>
<g fill="#000" style="text-anchor:middle">
<text x="640" y="856" textLength="121" lengthAdjust="spacing">ECMWF-INDEX-ANAL</text>
<text x="640" y="873">LCL-Height</text>
<text x="640" y="889">m</text>
<text x="730" y="886">100</text><text x="772" y="886">400</text><text x="814" y="886">800</text><text x="856" y="886">1200</text><text x="898" y="886">1600</text><text x="940" y="886">2000</text>
</g>
</svg>
</body></html>
